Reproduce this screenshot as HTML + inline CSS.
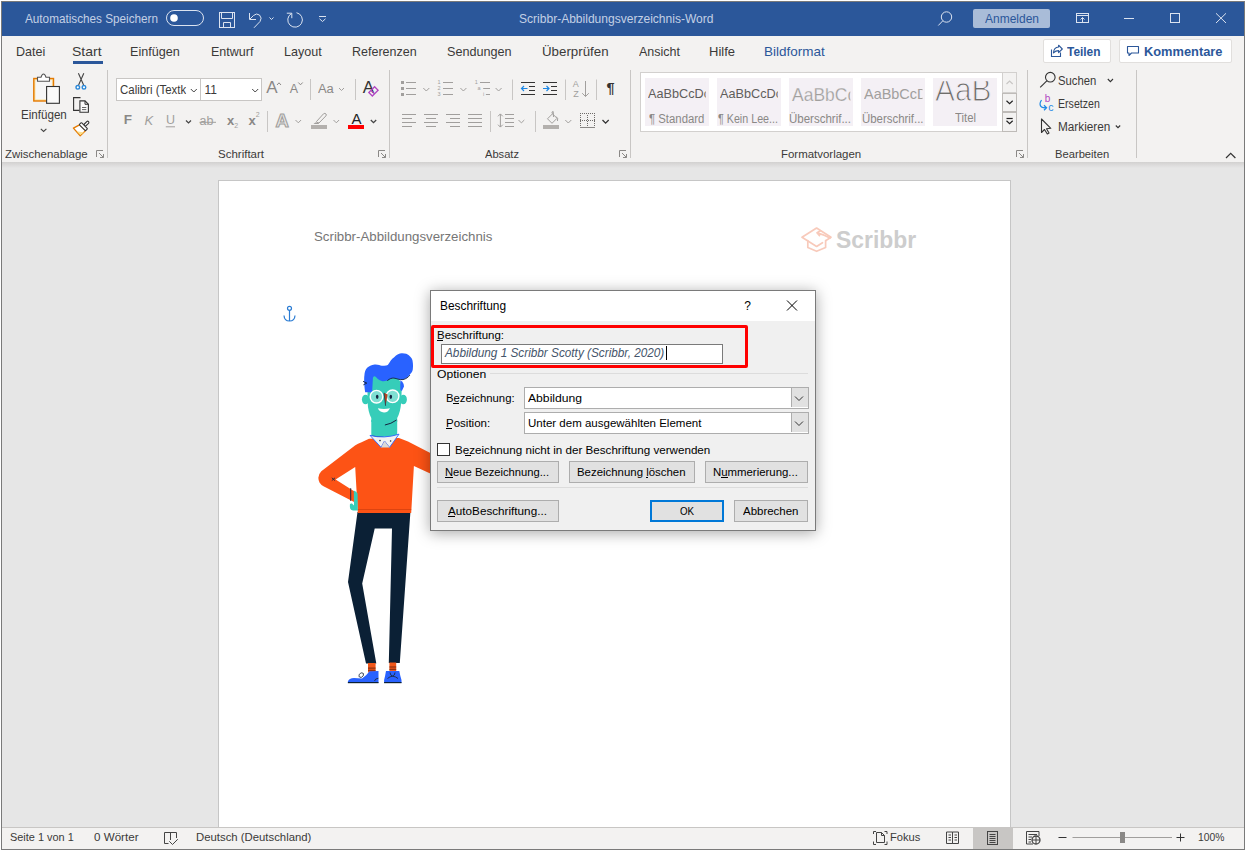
<!DOCTYPE html>
<html><head><meta charset="utf-8"><title>Word</title>
<style>
html,body{margin:0;padding:0;}
body{width:1247px;height:851px;position:relative;overflow:hidden;background:#fff;font-family:"Liberation Sans",sans-serif;}
.t{position:absolute;white-space:nowrap;line-height:1;transform-origin:0 0;}
svg{overflow:visible}
</style></head><body>
<div style="position:absolute;left:1px;top:1px;width:1244px;height:849px;background:#7a7a7a;"></div>
<div style="position:absolute;left:2px;top:2px;width:1242px;height:847px;background:#f3f2f1;"></div>
<div style="position:absolute;left:2px;top:2px;width:1242px;height:34px;background:#2b579a;"></div>
<div style="position:absolute;left:2px;top:162px;width:1242px;height:665px;background:#e6e6e6;"></div>
<div style="position:absolute;left:2px;top:162px;width:1242px;height:6px;background:linear-gradient(#d2d1d0,#e6e6e6)"></div>
<div style="position:absolute;left:218px;top:180px;width:793px;height:647px;background:#c6c6c6;"></div>
<div style="position:absolute;left:219px;top:181px;width:791px;height:646px;background:#ffffff;"></div>
<div style="position:absolute;left:2px;top:827px;width:1242px;height:1px;background:#c8c6c4;"></div>
<div style="position:absolute;left:2px;top:828px;width:1242px;height:21px;background:#f3f2f1;"></div>
<div class="t" id="t0" style="left:25.00px;top:11.99px;font-size:13px;color:#c3d0e5;transform:scaleX(0.9022);">Automatisches Speichern</div>
<div class="t" id="t1" style="left:519.00px;top:11.99px;font-size:13px;color:#c3d0e5;transform:scaleX(0.9261);">Scribbr-Abbildungsverzeichnis-Word</div>
<div style="position:absolute;left:973px;top:9px;width:77px;height:19px;background:#a9bcd8;border-radius:2px"></div>
<div class="t" id="t2" style="left:984.50px;top:11.79px;font-size:13px;color:#2b579a;transform:scaleX(0.9223);">Anmelden</div>
<div class="t" id="t3" style="left:15.50px;top:45.19px;font-size:13px;color:#3b3a39;transform:scaleX(0.9651);">Datei</div>
<div class="t" id="t4" style="left:72.40px;top:45.19px;font-size:13px;color:#3b3a39;transform:scaleX(1.0776);">Start</div>
<div class="t" id="t5" style="left:129.70px;top:45.19px;font-size:13px;color:#3b3a39;transform:scaleX(0.9702);">Einfügen</div>
<div class="t" id="t6" style="left:211.20px;top:45.19px;font-size:13px;color:#3b3a39;transform:scaleX(0.9619);">Entwurf</div>
<div class="t" id="t7" style="left:284.00px;top:45.19px;font-size:13px;color:#3b3a39;transform:scaleX(0.9655);">Layout</div>
<div class="t" id="t8" style="left:352.00px;top:45.19px;font-size:13px;color:#3b3a39;transform:scaleX(0.9610);">Referenzen</div>
<div class="t" id="t9" style="left:447.00px;top:45.19px;font-size:13px;color:#3b3a39;transform:scaleX(0.9712);">Sendungen</div>
<div class="t" id="t10" style="left:542.00px;top:45.19px;font-size:13px;color:#3b3a39;transform:scaleX(1.0239);">Überprüfen</div>
<div class="t" id="t11" style="left:639.00px;top:45.19px;font-size:13px;color:#3b3a39;transform:scaleX(0.9615);">Ansicht</div>
<div class="t" id="t12" style="left:709.00px;top:45.19px;font-size:13px;color:#3b3a39;transform:scaleX(0.9994);">Hilfe</div>
<div class="t" id="t13" style="left:763.50px;top:45.19px;font-size:13px;color:#2b579a;transform:scaleX(1.0371);">Bildformat</div>
<div style="position:absolute;left:73px;top:61px;width:30px;height:3px;background:#2b579a;"></div>
<div style="position:absolute;left:1043px;top:39px;width:66px;height:22px;background:#fff;border:1px solid #e1dfdd;border-radius:2px"></div>
<div style="position:absolute;left:1119px;top:39px;width:111px;height:22px;background:#fff;border:1px solid #e1dfdd;border-radius:2px"></div>
<div class="t" id="t14" style="left:1067.00px;top:44.99px;font-size:13px;color:#2b579a;font-weight:700;transform:scaleX(0.9151);">Teilen</div>
<div class="t" id="t15" style="left:1143.50px;top:44.99px;font-size:13px;color:#2b579a;font-weight:700;transform:scaleX(0.9878);">Kommentare</div>
<div class="t" id="t16" style="left:4.90px;top:148.96px;font-size:11.5px;color:#3b3a39;transform:scaleX(0.9951);">Zwischenablage</div>
<div class="t" id="t17" style="left:217.50px;top:148.96px;font-size:11.5px;color:#3b3a39;transform:scaleX(0.9997);">Schriftart</div>
<div class="t" id="t18" style="left:485.00px;top:148.96px;font-size:11.5px;color:#3b3a39;transform:scaleX(0.9667);">Absatz</div>
<div class="t" id="t19" style="left:780.80px;top:148.96px;font-size:11.5px;color:#3b3a39;transform:scaleX(0.9957);">Formatvorlagen</div>
<div class="t" id="t20" style="left:1054.60px;top:148.96px;font-size:11.5px;color:#3b3a39;transform:scaleX(0.9726);">Bearbeiten</div>
<div style="position:absolute;left:107px;top:70px;width:1px;height:88px;background:#c8c6c4;"></div>
<div style="position:absolute;left:389px;top:70px;width:1px;height:88px;background:#c8c6c4;"></div>
<div style="position:absolute;left:630px;top:70px;width:1px;height:88px;background:#c8c6c4;"></div>
<div style="position:absolute;left:1027px;top:70px;width:1px;height:88px;background:#c8c6c4;"></div>
<div style="position:absolute;left:1136px;top:70px;width:1px;height:88px;background:#c8c6c4;"></div>
<div class="t" id="t21" style="left:20.60px;top:108.74px;font-size:12px;color:#3b3a39;transform:scaleX(0.9668);">Einfügen</div>
<div class="t" id="t22" style="left:1058.20px;top:74.94px;font-size:12px;color:#3b3a39;transform:scaleX(0.9410);">Suchen</div>
<div class="t" id="t23" style="left:1058.20px;top:98.04px;font-size:12px;color:#3b3a39;transform:scaleX(0.8826);">Ersetzen</div>
<div class="t" id="t24" style="left:1058.20px;top:120.84px;font-size:12px;color:#3b3a39;transform:scaleX(0.9801);">Markieren</div>
<div style="position:absolute;left:116px;top:78px;width:84px;height:21px;background:#fff;border:1px solid #c8c6c4"></div>
<div style="position:absolute;left:200px;top:78px;width:60px;height:21px;background:#fff;border:1px solid #c8c6c4"></div>
<div class="t" id="t25" style="left:119.80px;top:84.34px;font-size:12px;color:#3b3a39;transform:scaleX(0.9544);clip-path:inset(-10px 0.00px -10px -2px);">Calibri (Textk</div>
<div class="t" id="t26" style="left:204.40px;top:84.34px;font-size:12px;color:#3b3a39;">11</div>
<div style="position:absolute;left:640px;top:72px;width:375px;height:58px;background:#fff;border:1px solid #d2d0ce"></div>
<div style="position:absolute;left:645px;top:78px;width:64px;height:48px;background:#f4f0f5;"></div>
<div style="position:absolute;left:717px;top:78px;width:64px;height:48px;background:#f4f0f5;"></div>
<div style="position:absolute;left:789px;top:78px;width:64px;height:48px;background:#f4f0f5;"></div>
<div style="position:absolute;left:861px;top:78px;width:64px;height:48px;background:#f4f0f5;"></div>
<div style="position:absolute;left:933px;top:78px;width:64px;height:48px;background:#f4f0f5;"></div>
<div class="t" id="t27" style="left:648.00px;top:87.47px;font-size:13.5px;color:#5f5d5b;transform:scaleX(0.9389);clip-path:inset(-10px 4.58px -10px -2px);">AaBbCcDc</div>
<div class="t" id="t28" style="left:720.00px;top:87.47px;font-size:13.5px;color:#5f5d5b;transform:scaleX(0.9389);clip-path:inset(-10px 4.47px -10px -2px);">AaBbCcDc</div>
<div class="t" id="t29" style="left:791.50px;top:85.41px;font-size:19px;color:#a19f9d;transform:scaleX(0.9202);clip-path:inset(-10px 30.65px -10px -2px);-webkit-text-stroke:0.25px #f4f0f5;">AaBbCcDd</div>
<div class="t" id="t30" style="left:863.50px;top:86.72px;font-size:14.5px;color:#a19f9d;transform:scaleX(0.9967);clip-path:inset(-10px 13.04px -10px -2px);">AaBbCcDd</div>
<div class="t" id="t31" style="left:934.50px;top:72.66px;font-size:33px;color:#6f6d6b;transform:scaleX(0.9058);clip-path:inset(8.5px 0 -5px 0);-webkit-text-stroke:1.1px #f4f0f5;">AaB</div>
<div class="t" id="t32" style="left:649.20px;top:112.74px;font-size:12px;color:#8a8886;transform:scaleX(0.9473);">¶ Standard</div>
<div class="t" id="t33" style="left:717.50px;top:112.74px;font-size:12px;color:#8a8886;transform:scaleX(0.8934);">¶ Kein Lee...</div>
<div class="t" id="t34" style="left:789.00px;top:112.74px;font-size:12px;color:#8a8886;transform:scaleX(0.9585);">Überschrif...</div>
<div class="t" id="t35" style="left:861.50px;top:112.74px;font-size:12px;color:#8a8886;transform:scaleX(0.9507);">Überschrif...</div>
<div class="t" id="t36" style="left:955.00px;top:112.34px;font-size:12px;color:#8a8886;transform:scaleX(0.9445);">Titel</div>
<div class="t" id="t37" style="left:314.10px;top:229.99px;font-size:13px;color:#767676;transform:scaleX(1.0202);">Scribbr-Abbildungsverzeichnis</div>
<div class="t" id="t38" style="left:835.80px;top:227.58px;font-size:24px;color:#cdcdcd;font-weight:700;transform:scaleX(0.9544);">Scribbr</div>
<div class="t" id="t39" style="left:10.40px;top:831.86px;font-size:11.5px;color:#3b3a39;transform:scaleX(0.9502);">Seite 1 von 1</div>
<div class="t" id="t40" style="left:94.00px;top:831.86px;font-size:11.5px;color:#3b3a39;transform:scaleX(1.0092);">0 Wörter</div>
<div class="t" id="t41" style="left:196.30px;top:831.86px;font-size:11.5px;color:#3b3a39;transform:scaleX(0.9865);">Deutsch (Deutschland)</div>
<div class="t" id="t42" style="left:890.10px;top:831.86px;font-size:11.5px;color:#3b3a39;transform:scaleX(0.9704);">Fokus</div>
<div class="t" id="t43" style="left:1198.30px;top:831.86px;font-size:11.5px;color:#3b3a39;transform:scaleX(0.8973);">100%</div>
<div style="position:absolute;left:973px;top:828px;width:40px;height:21px;background:#c8c6c4;"></div>
<svg style="position:absolute;left:300px;top:340px;" width="150" height="350" viewBox="0 0 150 350">
<g>
<!-- pants -->
<path d="M57.5,172 L110.4,172 L99.8,323 L88.8,323 L92,188.6 L74.7,188.6 L62.2,243.4 L76.3,323.5 L66,323.5 L48,242 Z" fill="#0b2035"/>
<!-- socks -->
<rect x="68" y="323" width="7.6" height="9.5" fill="#f0571a"/>
<rect x="68" y="327.6" width="7.6" height="1" fill="#7a2a10"/>
<rect x="68" y="329.8" width="7.6" height="1" fill="#7a2a10"/>
<rect x="89.4" y="322.5" width="6.8" height="9" fill="#f0571a"/>
<rect x="89.4" y="326.5" width="6.8" height="1" fill="#7a2a10"/>
<rect x="89.4" y="328.8" width="6.8" height="1" fill="#7a2a10"/>
<!-- shoes -->
<path d="M47.9,343 L47.9,341.5 Q49,338 54,338 L62,338.6 Q67,335 69.5,331.3 L78.5,331 L78.5,343 Z" fill="#2962ff"/>
<rect x="47.9" y="342" width="30.6" height="1.2" fill="#0b2035"/>
<path d="M59.3,337.2 Q58.3,333.5 61.8,332.8 Q64.3,332.8 63.3,335.7 Q61.3,338.2 59.8,337.2" fill="none" stroke="#1d2a44" stroke-width="0.9"/>
<path d="M74.5,341 Q75,338.5 78.3,338.3" fill="none" stroke="#1d2a44" stroke-width="0.9"/>
<path d="M86,331 L99.3,331 Q100.2,336 101.5,340 L101.5,343 L84.1,343 L84.1,340 Q85.2,336 86,331 Z" fill="#2962ff"/>
<rect x="84.1" y="342" width="17.4" height="1.2" fill="#0b2035"/>
<path d="M87.5,338.5 Q92.5,334 98,338.5 M90,332.5 Q90.5,336 92.5,336 Q95,335.5 95,332.5" fill="none" stroke="#1d2a44" stroke-width="0.9"/>
<!-- sweater -->
<path d="M69,98.8 L61,102.5 Q58,103.5 55,105.5 L21.3,131.2 Q16.5,136 19.5,142.5 Q21,145 23.5,146.2 L54.1,162.1 L54.1,151.3 L35.6,139.5 L55.2,127 L57.8,173 L111.2,173 L113.9,126 L140,138 L140,118 L108,101.6 L99,98 Z" fill="#fd5315"/>
<rect x="57.6" y="169" width="53.6" height="1" fill="#dd4410"/>
<!-- elbow x -->
<path d="M31.8,137.8 L35,140.6 M31.8,140.6 L35,137.8" stroke="#1d2a44" stroke-width="0.9"/>
<!-- hand -->
<path d="M53.8,150.5 Q56.5,151.5 57.6,153.5 L57.8,170.6 L53,170.6 Q50,170.4 49.9,167 L49.9,164.5 Q50.3,163 52,163.5 L54,165.5 Z" fill="#36cdb9"/>
<rect x="50.2" y="148.2" width="1" height="12.7" fill="#1d2a44"/>
<!-- neck/face -->
<path d="M71.3,80 L71.3,96 Q84,99.5 97.2,96 L97.2,80 Z" fill="#36cdb9"/>
<path d="M71.5,96 Q84,99 97,96" stroke="#1b2b3e" stroke-width="0.9" fill="none"/>
<!-- collar -->
<path d="M70,95.4 L81.1,107.4 L84.5,101 L89.5,107.4 L99,94.2 Q84,99 70,95.4 Z" fill="#f2f2f2" stroke="#2c63ff" stroke-width="0.9"/>
<path d="M81.1,107.4 L84.5,101 L89.5,107.4 Z" fill="#d9d9d9"/>
<circle cx="80" cy="100.6" r="0.8" fill="#1b2b3e"/><circle cx="90.6" cy="101" r="0.8" fill="#1b2b3e"/>
<!-- ears -->
<ellipse cx="65.5" cy="59.5" rx="3.6" ry="4.8" fill="#36cdb9"/>
<ellipse cx="103.3" cy="59.5" rx="3.6" ry="4.8" fill="#36cdb9"/>
<!-- face -->
<path d="M67.4,38 Q72,33 80,35 L96,36 Q101.5,40 101.7,50 L101.2,62 Q100.5,72 97.2,78 L97.2,82 L71.3,82 L71.3,78 Q68,72 67.6,62 Z" fill="#36cdb9"/>
<!-- hair -->
<path d="M65.2,52.2 C64,45 64,38 64.4,35.6 C64.8,29 68,25.5 74.6,24.6 C78,24.3 80,25.5 81.8,25.7 C84.5,26 86.5,25.8 87.8,25.1 C90,22 91.5,18.5 93.9,17.4 C97,14 100,13 102.2,13.2 C105.5,13.2 107.5,14 108.8,15.2 C111.5,17.5 112.7,19.5 112.7,21.8 C113.2,25 113,28 112.7,30.1 C112,32.5 110.5,34 109.4,35.1 C107.5,37.5 105.5,39 103.3,39.5 C99,40.5 96,37.5 93.4,38.1 C90,38.5 89,40.3 87.3,40.6 C85,41.2 83,41.5 81.8,41.1 C79,40.5 77,38.3 76.2,37.3 C75.5,36.5 74.5,36 74,36.2 C73,37 72.8,38 72.9,38.4 L72.1,52.2 Z" fill="#2962ff"/>
<path d="M100.3,40.2 Q104.2,42.5 103.9,46.7 L101.8,51 L100.3,50 Z" fill="#2962ff"/>
<path d="M87.3,40.6 C90,38.6 91.5,38 93.9,38.1 C97,38.5 99,40 103,39.6 C106,39 108.5,37 109.9,35.1" stroke="#142340" stroke-width="0.9" fill="none"/>
<path d="M63,41.3 L66.8,43.1 L63.3,44.9" stroke="#142340" stroke-width="0.9" fill="none"/>
<!-- glasses -->
<circle cx="76.5" cy="56.7" r="6.3" fill="#7fdfd3" stroke="#fff" stroke-width="1.4"/>
<circle cx="92.6" cy="56.3" r="6.3" fill="#7fdfd3" stroke="#fff" stroke-width="1.4"/>
<ellipse cx="77.2" cy="56.8" rx="1.3" ry="2.1" fill="#142340"/>
<ellipse cx="90.8" cy="56.8" rx="1.3" ry="2.1" fill="#142340"/>
<!-- nose -->
<path d="M84,52.8 L87.6,54.5 L85.6,65.8 Z" fill="#b8431f"/>
<path d="M84,52.8 L85.6,65.8" stroke="#142340" stroke-width="0.7"/>
<!-- smile -->
<path d="M77.8,68.2 Q84,69.8 90,68.2 Q88,72.5 84,72.4 Q79.5,72 77.8,68.2 Z" fill="#fff"/>
<!-- jaw line -->
<path d="M84.9,85 Q91,84 96.5,80" stroke="#142340" stroke-width="1" fill="none"/>
</g></svg>
<div style="position:absolute;left:430px;top:290px;width:384px;height:239px;background:#f0f0f0;border:1px solid #7a7a7a;box-shadow:0 2px 14px rgba(0,0,0,0.35)"></div>
<div style="position:absolute;left:431px;top:291px;width:384px;height:30px;background:#ffffff;"></div>
<div class="t" id="t44" style="left:439.60px;top:300.42px;font-size:12.5px;color:#000000;transform:scaleX(0.9499);">Beschriftung</div>
<div class="t" id="t45" style="left:437.30px;top:330.06px;font-size:11.5px;color:#000000;transform:scaleX(0.9981);">Beschriftung:</div>
<div style="position:absolute;left:441px;top:344px;width:280px;height:18px;background:#fff;border:1px solid #7a7a7a"></div>
<div class="t" id="t46" style="left:444.70px;top:346.54px;font-size:12px;color:#44546a;font-style:italic;transform:scaleX(0.9814);">Abbildung 1 Scribbr Scotty (Scribbr, 2020)</div>
<div style="position:absolute;left:666px;top:346px;width:1px;height:14px;background:#000;"></div>
<div style="position:absolute;left:431px;top:325px;width:311px;height:37px;border:3px solid #ff0000;border-radius:2px"></div>
<div class="t" id="t47" style="left:437.30px;top:369.16px;font-size:11.5px;color:#000000;transform:scaleX(1.0581);">Optionen</div>
<div style="position:absolute;left:490px;top:373px;width:318px;height:1px;background:#dcdcdc;"></div>
<div class="t" id="t48" style="left:446.20px;top:393.46px;font-size:11.5px;color:#000000;transform:scaleX(0.9842);">Bezeichnung:</div>
<div class="t" id="t49" style="left:446.20px;top:418.26px;font-size:11.5px;color:#000000;transform:scaleX(1.0021);">Position:</div>
<div style="position:absolute;left:524px;top:387px;width:283px;height:20px;background:#fff;border:1px solid #adadad"></div>
<div style="position:absolute;left:791px;top:388px;width:16px;height:19px;background:#e1e1e1;border-left:1px solid #adadad"></div>
<div style="position:absolute;left:524px;top:412px;width:283px;height:20px;background:#fff;border:1px solid #adadad"></div>
<div style="position:absolute;left:791px;top:413px;width:16px;height:19px;background:#e1e1e1;border-left:1px solid #adadad"></div>
<div class="t" id="t50" style="left:528.40px;top:393.46px;font-size:11.5px;color:#000000;transform:scaleX(1.0575);">Abbildung</div>
<div class="t" id="t51" style="left:528.40px;top:418.26px;font-size:11.5px;color:#000000;transform:scaleX(1.0009);">Unter dem ausgewählten Element</div>
<div style="position:absolute;left:437px;top:443px;width:11px;height:11px;background:#fff;border:1px solid #333"></div>
<div class="t" id="t52" style="left:454.50px;top:445.16px;font-size:11.5px;color:#000000;transform:scaleX(1.0110);">Bezeichnung nicht in der Beschriftung verwenden</div>
<div style="position:absolute;left:437px;top:461px;width:120px;height:20px;background:#e1e1e1;border:1px solid #adadad"></div>
<div style="position:absolute;left:569px;top:461px;width:124px;height:20px;background:#e1e1e1;border:1px solid #adadad"></div>
<div style="position:absolute;left:705px;top:461px;width:101px;height:20px;background:#e1e1e1;border:1px solid #adadad"></div>
<div style="position:absolute;left:437px;top:487px;width:371px;height:1px;background:#dcdcdc;"></div>
<div style="position:absolute;left:437px;top:500px;width:120px;height:20px;background:#e1e1e1;border:1px solid #adadad"></div>
<div style="position:absolute;left:650px;top:500px;width:70px;height:18px;background:#e1e1e1;border:2px solid #0078d7"></div>
<div style="position:absolute;left:734px;top:500px;width:72px;height:20px;background:#e1e1e1;border:1px solid #adadad"></div>
<div class="t" id="t53" style="left:445.30px;top:467.46px;font-size:11.5px;color:#000000;transform:scaleX(0.9749);">Neue Bezeichnung...</div>
<div class="t" id="t54" style="left:577.30px;top:467.46px;font-size:11.5px;color:#000000;transform:scaleX(0.9923);">Bezeichnung löschen</div>
<div class="t" id="t55" style="left:713.40px;top:467.46px;font-size:11.5px;color:#000000;transform:scaleX(0.9902);">Nummerierung...</div>
<div class="t" id="t56" style="left:447.90px;top:506.26px;font-size:11.5px;color:#000000;transform:scaleX(1.0178);">AutoBeschriftung...</div>
<div class="t" id="t57" style="left:679.80px;top:506.26px;font-size:11.5px;color:#000000;transform:scaleX(0.8481);">OK</div>
<div class="t" id="t58" style="left:743.10px;top:506.26px;font-size:11.5px;color:#000000;transform:scaleX(0.9978);">Abbrechen</div>
<svg style="position:absolute;left:0px;top:0px;" width="1247" height="851" viewBox="0 0 1247 851"><g fill="none" stroke="#000" stroke-width="1">
<path d="M787,300.5 L797,310.5 M797,300.5 L787,310.5"/>
<path d="M795,396.5 L799,400.5 L803,396.5 M795,421.5 L799,425.5 L803,421.5" stroke="#333"/>
</g>
<g fill="#000">
<rect x="437" y="340" width="6" height="1"/>
<rect x="453" y="403" width="6" height="1"/>
<rect x="446" y="428" width="6" height="1"/>
<rect x="465" y="455" width="6" height="1"/>
<rect x="445" y="477" width="8" height="1"/>
<rect x="646" y="477" width="2" height="1"/>
<rect x="721" y="477" width="7" height="1"/>
<rect x="448" y="516" width="7" height="1"/>
</g></svg>
<div class="t" id="t59" style="left:744.30px;top:300.14px;font-size:12px;color:#000;">?</div>
<svg style="position:absolute;left:0px;top:0px;" width="1247" height="36" viewBox="0 0 1247 36">
<g fill="none" stroke="#dbe3f0" stroke-width="1">
<rect x="166.5" y="10.5" width="37" height="15" rx="7.5"/>
<rect x="219.5" y="12.5" width="15" height="15"/>
<path d="M221.5,12.5 V18.5 H232.5 V12.5"/>
<path d="M223.5,27.5 V22.5 H230.5 V27.5"/>
<path d="M249.5,13 V19.5 H256"/>
<path d="M250,19 L253.5,15.5 Q256.5,12.8 259.5,15 Q262.5,18 260,21.5 L254,27.8"/>
<path d="M269.5,17.5 L271.5,19.5 L273.5,17.5"/>
<path d="M291.5,13.5 A7.3,7.3 0 1 0 296.5,12.7"/>
<path d="M286.8,13.2 H291.8 V18.2"/>
<path d="M319,16.5 H326"/>
<path d="M319.5,18.8 L322.5,21.5 L325.5,18.8"/>
<circle cx="946.5" cy="17" r="5.2"/>
<path d="M942.8,20.8 L938.3,25.5"/>
<rect x="1076.5" y="13.5" width="12" height="9"/>
<path d="M1076.5,15.5 H1088.5 M1082.5,22.5 V17.5 M1080.5,19.5 L1082.5,17.5 L1084.5,19.5"/>
<path d="M1124,18.5 H1134"/>
<rect x="1170.5" y="13.5" width="9" height="9"/>
<path d="M1216,13.3 L1226,23 M1226,13.3 L1216,23"/>
</g>
<circle cx="174" cy="18" r="3.8" fill="#fff"/>
</svg>
<svg style="position:absolute;left:0px;top:60px;" width="110" height="90" viewBox="0 0 110 90">
<g transform="translate(0,-60)">
<rect x="33.8" y="78.5" width="19.7" height="22.5" fill="#fbe2a8" stroke="#e47a00" stroke-width="1.4"/>
<rect x="35.5" y="80.2" width="16.3" height="19.1" fill="#f7f7f7"/>
<path d="M37.5,81.3 V77.3 H41 Q42,74 43.5,74 Q45,74 46,77.3 H49.5 V81.3 Z" fill="#fff" stroke="#555" stroke-width="1.1"/>
<rect x="46.6" y="86.5" width="12.8" height="16.8" fill="#fafafa" stroke="#333" stroke-width="1.1"/>
<path d="M40.8,128.8 L43.6,131.5 L46.4,128.8" fill="none" stroke="#444" stroke-width="1.1"/>
<path d="M78.4,73.3 L83.6,85 M83.8,73.3 L78.6,85" stroke="#444" stroke-width="1.1"/>
<circle cx="77.8" cy="87.3" r="1.8" fill="#fff" stroke="#2b88d8" stroke-width="1.4"/>
<circle cx="84" cy="87.3" r="1.8" fill="#fff" stroke="#2b88d8" stroke-width="1.4"/>
<path d="M80.5,97.6 H73.6 V110.4 H79.4" fill="none" stroke="#333" stroke-width="1.1"/>
<path d="M79.9,100.9 H85 L88.4,104.3 V112.3 H79.9 Z" fill="#fafafa" stroke="#333" stroke-width="1.1"/>
<path d="M85,100.9 V104.3 H88.4" fill="none" stroke="#333" stroke-width="1"/>
<path d="M82,107.5 H86.3 M82,109.6 H86.3" stroke="#555" stroke-width="0.9"/>
<path d="M73.4,128.1 L80,124.6 L85.6,130.6 L80.2,135.7 Z" fill="#fff" stroke="#e47a00" stroke-width="1.3" stroke-linejoin="round"/>
<path d="M76.5,131.2 L84,132.6 L80.3,135 Z" fill="#fbe08a"/>
<g transform="translate(83.4,126.7) rotate(45)" fill="#fff" stroke="#333" stroke-width="1.1"><rect x="-1.2" y="-7.2" width="2.4" height="5.8" rx="1.2"/><rect x="-4.4" y="-1.5" width="8.8" height="3" rx="0.6"/></g>
</g></svg>
<div class="t" id="t60" style="left:123.70px;top:113.37px;font-size:13.5px;color:#8a8886;font-weight:700;">F</div>
<div class="t" id="t61" style="left:144.50px;top:113.79px;font-size:13px;color:#a19f9d;font-style:italic;">K</div>
<div class="t" id="t62" style="left:166.10px;top:114.22px;font-size:12.5px;color:#a19f9d;">U</div>
<div class="t" id="t63" style="left:199.60px;top:114.72px;font-size:12.5px;color:#a19f9d;">ab</div>
<div class="t" id="t64" style="left:226.90px;top:113.99px;font-size:13px;color:#8a8886;font-weight:700;">x</div>
<div class="t" id="t65" style="left:234.20px;top:122.07px;font-size:7px;color:#a19f9d;">2</div>
<div class="t" id="t66" style="left:248.50px;top:113.99px;font-size:13px;color:#8a8886;font-weight:700;">x</div>
<div class="t" id="t67" style="left:255.70px;top:111.07px;font-size:7px;color:#a19f9d;">2</div>
<div class="t" id="t68" style="left:266.30px;top:79.40px;font-size:17px;color:#8a8886;">A</div>
<div class="t" id="t69" style="left:289.70px;top:83.22px;font-size:12.5px;color:#8a8886;">A</div>
<div class="t" id="t70" style="left:318.40px;top:83.22px;font-size:12.5px;color:#8a8886;transform:scaleX(1.0329);">Aa</div>
<div class="t" id="t71" style="left:362.70px;top:79.40px;font-size:17px;color:#333;">A</div>
<div class="t" id="t72" style="left:351.50px;top:111.30px;font-size:15px;color:#222;">A</div>
<svg style="position:absolute;left:100px;top:60px;" width="300" height="80" viewBox="0 0 300 80"><g transform="translate(-100,-60)" fill="none" stroke-width="1">
<path d="M190.8,89 L193.8,92 L196.8,89" stroke="#444444"/>
<path d="M252.2,89 L255.2,92 L258.2,89" stroke="#444444"/>
<path d="M277,85 L279,82.8 L281,85" stroke="#8a8886"/>
<path d="M298.3,82.5 L300.5,84.8 L302.7,82.5" stroke="#8a8886"/>
<path d="M310.5,79 V100 M355.5,79 V100 M267.5,111 V132" stroke="#c8c6c4"/>
<path d="M339,88 L341.5,90.5 L344,88" stroke="#a19f9d"/>
<path d="M372.3,96 L368.8,92.5 L374.6,86.7 L378.1,90.2 Z M370.9,90.4 L374.4,93.9" stroke="#b146c2" stroke-width="1.3"/>
<path d="M186,120.5 L188.5,123 L191,120.5" stroke="#444444" stroke-width="1.2"/>
<path d="M165.8,126.8 H175" stroke="#a19f9d"/>
<path d="M199.5,122.3 H216" stroke="#a19f9d"/>
<path d="M295.5,120 L298.3,122.8 L301.1,120" stroke="#a19f9d"/>
<path d="M333.5,120 L336.3,122.8 L339.1,120" stroke="#a19f9d"/>
<path d="M370.8,120 L373.5,122.7 L376.2,120" stroke="#444444" stroke-width="1.3"/>

<path d="M315.3,122.5 L313.5,124 H318 L319.5,122.3 Z" fill="#a19f9d" stroke="none"/>
<path d="M316.5,121.5 L323.5,113.8 Q325,112.8 326,114 Q326.8,115 325.8,116 L318.5,123.5 Z" stroke="#a19f9d"/>
</g></svg>
<div style="position:absolute;left:311px;top:125px;width:16px;height:4px;background:#b3b0ad;"></div>
<div class="t" id="t73" style="left:275.40px;top:111.53px;font-size:18.5px;color:#e9e8e7;font-weight:700;-webkit-text-stroke:1.1px #a19f9d;">A</div>
<div style="position:absolute;left:348px;top:125px;width:16px;height:4px;background:#ff0000;"></div>
<svg style="position:absolute;left:0px;top:0px;" width="1247" height="170" viewBox="0 0 1247 170"><rect x="401" y="81" width="3" height="3" fill="#a19f9d"/><rect x="401" y="87" width="3" height="3" fill="#a19f9d"/><rect x="401" y="93" width="3" height="3" fill="#a19f9d"/><path d="M406,82.5 H416" stroke="#a19f9d" stroke-width="1"/><path d="M406,88.5 H416" stroke="#a19f9d" stroke-width="1"/><path d="M406,94.5 H416" stroke="#a19f9d" stroke-width="1"/><path d="M443,82.5 H453" stroke="#a19f9d" stroke-width="1"/><path d="M443,88.5 H453" stroke="#a19f9d" stroke-width="1"/><path d="M443,94.5 H453" stroke="#a19f9d" stroke-width="1"/><path d="M480,82.5 H490 M483.2,88.5 H490 M485.9,94.5 H490" stroke="#a19f9d"/><path d="M423.3,88 L426.3,91 L429.3,88" stroke="#a19f9d" fill="none"/><path d="M460.4,88 L463.4,91 L466.4,88" stroke="#a19f9d" fill="none"/><path d="M495.6,88 L498.6,91 L501.6,88" stroke="#a19f9d" fill="none"/><path d="M402,114.5 H416 M402,118.5 H412 M402,122.5 H416 M402,126.5 H412" stroke="#a19f9d"/><path d="M424,114.5 H438 M426,118.5 H436 M424,122.5 H438 M426,126.5 H436" stroke="#a19f9d"/><path d="M446,114.5 H460 M450,118.5 H460 M446,122.5 H460 M450,126.5 H460" stroke="#a19f9d"/><path d="M468,114.5 H482 M468,118.5 H482 M468,122.5 H482 M468,126.5 H482" stroke="#a19f9d"/><path d="M512.5,79.5 V100 M565.5,79.5 V100 M596.5,79.5 V100 M490.5,111 V132 M535.5,111 V132" stroke="#c8c6c4"/><path d="M521,82.5 H535" stroke="#333" stroke-width="1"/><path d="M521,94.5 H535" stroke="#333" stroke-width="1"/><path d="M529,86.5 H535" stroke="#333" stroke-width="1"/><path d="M529,90.5 H535" stroke="#333" stroke-width="1"/><path d="M521.5,88.5 H527.5 M524,86 L521.5,88.5 L524,91" stroke="#1e88e5" stroke-width="1.2" fill="none"/><path d="M543,82.5 H557" stroke="#333" stroke-width="1"/><path d="M543,94.5 H557" stroke="#333" stroke-width="1"/><path d="M551,86.5 H557" stroke="#333" stroke-width="1"/><path d="M551,90.5 H557" stroke="#333" stroke-width="1"/><path d="M543,88.5 H549 M546.5,86 L549,88.5 L546.5,91" stroke="#1e88e5" stroke-width="1.2" fill="none"/><path d="M585.5,81 V96.5 M582.2,93.2 L585.5,96.5 L588.8,93.2" stroke="#a19f9d" fill="none"/><path d="M500.4,114 V127 M498,116.3 L500.4,113.9 L502.8,116.3 M498,124.7 L500.4,127.1 L502.8,124.7" stroke="#a19f9d" fill="none"/><path d="M505,114.5 H514" stroke="#a19f9d" stroke-width="1"/><path d="M505,118.5 H514" stroke="#a19f9d" stroke-width="1"/><path d="M505,122.5 H514" stroke="#a19f9d" stroke-width="1"/><path d="M505,126.5 H514" stroke="#a19f9d" stroke-width="1"/><path d="M518.5,120 L521.4,122.9 L524.3,120" stroke="#a19f9d" fill="none"/><path d="M547.5,118.8 L552.5,113.8 L557,118.3 L552,123.3 Z M552.5,113.8 Q551,111.5 553.2,111.5 L553.5,117" stroke="#a19f9d" fill="none"/><path d="M556,116.5 Q558.5,118 557.5,121" stroke="#a19f9d" fill="none"/><rect x="543" y="125" width="16" height="4" fill="#b3b0ad"/><path d="M565.3,120 L568.3,123 L571.3,120" stroke="#a19f9d" fill="none"/><rect x="580" y="113" width="1" height="1" fill="#6d6b69"/><rect x="580" y="120" width="1" height="1" fill="#6d6b69"/><rect x="582" y="113" width="1" height="1" fill="#6d6b69"/><rect x="582" y="120" width="1" height="1" fill="#6d6b69"/><rect x="584" y="113" width="1" height="1" fill="#6d6b69"/><rect x="584" y="120" width="1" height="1" fill="#6d6b69"/><rect x="586" y="113" width="1" height="1" fill="#6d6b69"/><rect x="586" y="120" width="1" height="1" fill="#6d6b69"/><rect x="588" y="113" width="1" height="1" fill="#6d6b69"/><rect x="588" y="120" width="1" height="1" fill="#6d6b69"/><rect x="590" y="113" width="1" height="1" fill="#6d6b69"/><rect x="590" y="120" width="1" height="1" fill="#6d6b69"/><rect x="592" y="113" width="1" height="1" fill="#6d6b69"/><rect x="592" y="120" width="1" height="1" fill="#6d6b69"/><rect x="594" y="113" width="1" height="1" fill="#6d6b69"/><rect x="594" y="120" width="1" height="1" fill="#6d6b69"/><rect x="580" y="115" width="1" height="1" fill="#6d6b69"/><rect x="587" y="115" width="1" height="1" fill="#6d6b69"/><rect x="594" y="115" width="1" height="1" fill="#6d6b69"/><rect x="580" y="117" width="1" height="1" fill="#6d6b69"/><rect x="587" y="117" width="1" height="1" fill="#6d6b69"/><rect x="594" y="117" width="1" height="1" fill="#6d6b69"/><rect x="580" y="119" width="1" height="1" fill="#6d6b69"/><rect x="587" y="119" width="1" height="1" fill="#6d6b69"/><rect x="594" y="119" width="1" height="1" fill="#6d6b69"/><rect x="580" y="121" width="1" height="1" fill="#6d6b69"/><rect x="587" y="121" width="1" height="1" fill="#6d6b69"/><rect x="594" y="121" width="1" height="1" fill="#6d6b69"/><rect x="580" y="123" width="1" height="1" fill="#6d6b69"/><rect x="587" y="123" width="1" height="1" fill="#6d6b69"/><rect x="594" y="123" width="1" height="1" fill="#6d6b69"/><rect x="580" y="125" width="1" height="1" fill="#6d6b69"/><rect x="587" y="125" width="1" height="1" fill="#6d6b69"/><rect x="594" y="125" width="1" height="1" fill="#6d6b69"/><path d="M580,127.5 H595" stroke="#8a8886" stroke-width="1"/><path d="M602.5,120 L605.6,123.1 L608.7,120" stroke="#333" stroke-width="1.3" fill="none"/></svg>
<div class="t" id="t74" style="left:437.40px;top:79.94px;font-size:5.5px;color:#a19f9d;">1</div>
<div class="t" id="t75" style="left:437.40px;top:85.94px;font-size:5.5px;color:#a19f9d;">2</div>
<div class="t" id="t76" style="left:437.40px;top:91.94px;font-size:5.5px;color:#a19f9d;">3</div>
<div class="t" id="t77" style="left:474.80px;top:79.94px;font-size:5.5px;color:#a19f9d;">1</div>
<div class="t" id="t78" style="left:477.50px;top:85.94px;font-size:5.5px;color:#a19f9d;">a</div>
<div class="t" id="t79" style="left:483.00px;top:91.94px;font-size:5.5px;color:#a19f9d;">i</div>
<div class="t" id="t80" style="left:572.80px;top:79.98px;font-size:9px;color:#a19f9d;">A</div>
<div class="t" id="t81" style="left:573.20px;top:89.58px;font-size:9px;color:#a19f9d;">Z</div>
<div class="t" id="t82" style="left:606.60px;top:81.32px;font-size:14.5px;color:#333;font-weight:700;">¶</div>
<div style="position:absolute;left:1002px;top:72px;width:13px;height:19px;background:#f3f2f1;border:1px solid #d2d0ce"></div>
<div style="position:absolute;left:1002px;top:93px;width:13px;height:17px;background:#f3f2f1;border:1px solid #bebbb8"></div>
<div style="position:absolute;left:1002px;top:112px;width:13px;height:18px;background:#f3f2f1;border:1px solid #bebbb8"></div>
<svg style="position:absolute;left:0px;top:0px;" width="1247" height="170" viewBox="0 0 1247 170"><g fill="none" stroke-width="1.2">
<path d="M1006.5,84 L1009.6,81 L1012.7,84" stroke="#c8c6c4"/>
<path d="M1006.5,100.8 L1009.6,103.6 L1012.7,100.8" stroke="#222"/>
<path d="M1006.5,118.5 H1012.7" stroke="#222"/>
<path d="M1006.5,120.8 L1009.6,123.6 L1012.7,120.8" stroke="#222"/>
</g></svg>
<svg style="position:absolute;left:0px;top:0px;" width="1247" height="170" viewBox="0 0 1247 170"><path d="M96.5,157 V150.5 H103" stroke="#8a8886" fill="none"/><path d="M99,153 L103.5,157.5 M103.5,154 V157.5 H100" stroke="#8a8886" fill="none"/><path d="M378.5,157 V150.5 H385" stroke="#8a8886" fill="none"/><path d="M381,153 L385.5,157.5 M385.5,154 V157.5 H382" stroke="#8a8886" fill="none"/><path d="M619.5,157 V150.5 H626" stroke="#8a8886" fill="none"/><path d="M622,153 L626.5,157.5 M626.5,154 V157.5 H623" stroke="#8a8886" fill="none"/><path d="M1016.5,157 V150.5 H1023" stroke="#8a8886" fill="none"/><path d="M1019,153 L1023.5,157.5 M1023.5,154 V157.5 H1020" stroke="#8a8886" fill="none"/></svg>
<svg style="position:absolute;left:0px;top:0px;" width="1247" height="170" viewBox="0 0 1247 170"><g fill="none" stroke="#333" stroke-width="1.1">
<circle cx="1050.3" cy="77.2" r="4.8"/>
<path d="M1046.8,80.8 L1040.2,87.3"/>
<path d="M1107.8,79 L1110.4,81.6 L1113,79"/>
<path d="M1115.8,125.5 L1118,127.7 L1120.2,125.5"/>
<path d="M1041.5,119 V132.5 L1044.5,129.5 L1047.3,134 L1049,133 L1046.5,128.7 L1050.8,128.3 Z" stroke-linejoin="round"/>
</g>
<g fill="none" stroke="#1e88e5" stroke-width="1.2">
<path d="M1041.5,100 Q1038.5,104.5 1041.5,107 Q1042.5,107.8 1046.5,107.8 M1044,105.3 L1046.6,107.8 L1044,110.3"/>
</g></svg>
<div class="t" id="t83" style="left:1044.80px;top:93.93px;font-size:10px;color:#b146c2;">b</div>
<div class="t" id="t84" style="left:1048.30px;top:102.01px;font-size:10.5px;color:#1e88e5;">c</div>
<svg style="position:absolute;left:0px;top:0px;" width="1247" height="70" viewBox="0 0 1247 70"><g fill="none" stroke="#2b579a" stroke-width="1.1">
<path d="M1051.5,49.5 V56.5 H1060.5 V52.5"/>
<path d="M1053.5,52.8 Q1053.8,47.3 1058.6,47 V45.2 L1062.3,49 L1058.6,52.6 V50.6 Q1055.6,50.6 1053.5,52.8 Z" stroke-linejoin="round"/>
<path d="M1127.5,46.5 H1138.5 V53 H1131.5 L1129,55.5 V53 H1127.5 Z" stroke-linejoin="round"/>
</g></svg>
<svg style="position:absolute;left:0px;top:0px;" width="1247" height="170" viewBox="0 0 1247 170"><path d="M1226,158 L1230.7,153.3 L1235.4,158" stroke="#333" stroke-width="1.2" fill="none"/></svg>
<svg style="position:absolute;left:0px;top:820px;" width="1247" height="31" viewBox="0 0 1247 31"><g transform="translate(0,-820)" fill="none" stroke="#444" stroke-width="1">
<path d="M168.5,843.5 H164.5 V832.5 H176.5 V838 M170.5,832.5 V840"/>
<path d="M169.3,841.3 L172.5,844.5 L177.8,839.2"/>
<path d="M873.5,834 V831.5 H876 M884.5,831.5 H887 V834 M887,841.5 V844.5 H884.5 M876,844.5 H873.5 V841.5"/>
<path d="M876.5,832.5 H881.5 L884.5,835.5 V842.5 H876.5 Z M881.5,832.5 V835.5 H884.5"/>
<path d="M946.5,832 H952.5 V843.5 H946.5 Z M952.5,832 H958.5 V843.5 H952.5 Z"/>
<path d="M948.5,835 H951 M948.5,837.5 H951 M948.5,840 H951 M954.5,835 H957 M954.5,837.5 H957 M954.5,840 H957"/>
<rect x="987.5" y="831.5" width="10" height="13"/>
<path d="M989.5,834.5 H995.5 M989.5,836.5 H995.5 M989.5,838.5 H995.5 M989.5,840.5 H995.5 M989.5,842.5 H995.5"/>
<path d="M1033,844 H1026.5 V831.5 H1039 V836"/>
<path d="M1028.5,834.5 H1037 M1028.5,837 H1032 M1028.5,839.5 H1031 M1028.5,842 H1031"/>
<circle cx="1036" cy="840" r="4" fill="#f3f2f1" stroke-width="1.3"/>
<path d="M1032,840 H1040 M1036,836 V844"/>
<path d="M1058.5,837.5 H1066.5 M1176.5,837.5 H1184.5 M1180.5,833.5 V841.5" stroke="#333"/>
<path d="M1072.5,837.5 H1172" stroke="#a19f9d"/>
</g></svg>
<div style="position:absolute;left:1120px;top:832px;width:5px;height:11px;background:#8a8886;"></div>
<svg style="position:absolute;left:0px;top:0px;" width="1247" height="851" viewBox="0 0 1247 851"><g fill="none" stroke="#2b7cd3" stroke-width="1.2">
<circle cx="289.5" cy="308.3" r="2"/>
<path d="M289.5,310.3 V321"/>
<path d="M284,315.5 Q284.3,321 289.5,321 Q294.7,321 295,315.5"/>
</g>
<g fill="none" stroke="#f8cabb" stroke-width="1.7" stroke-linejoin="round" stroke-linecap="round">
<path d="M826,240.5 L831,237.3 L816.6,228 L802,237.3 L816.6,246.5 L822.5,242.7"/>
<path d="M807.8,240.5 V247.5 L816.6,251.3 L825.6,247.5 V240.5"/>
<path d="M830,238 Q824,234.5 817,232.8 M817,232.8 L820.5,230.8 M817,232.8 L819.5,235.6"/>
</g></svg>
</body></html>
